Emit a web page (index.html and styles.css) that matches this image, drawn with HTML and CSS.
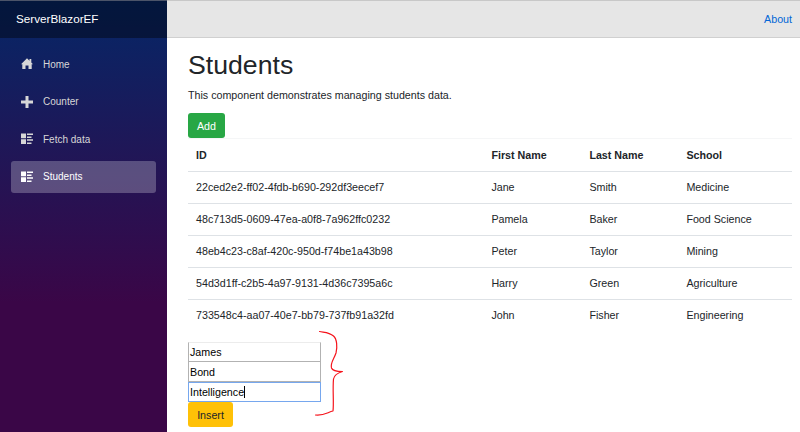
FILE: index.html
```html
<!DOCTYPE html>
<html lang="en">
<head>
<meta charset="utf-8">
<title>ServerBlazorEF</title>
<link rel="stylesheet" href="styles.css">
</head>
<body>
<div class="app">
  <aside class="sidebar">
    <div class="brand">ServerBlazorEF</div>
    <nav class="nav">
      <a class="nav-link"><svg class="icon" viewBox="0 0 12 12"><path d="M6 .2 0 6.3h1.3V11h3.200V7.500h3V11h3.200V6.300H12L10.300 4.500V1H8.500v1.700z"/></svg>Home</a>
      <a class="nav-link"><svg class="icon" viewBox="0 0 12 12"><path d="M4.500 0h3v4.500H12v3H7.500V12h-3V7.500H0v-3h4.500z"/></svg>Counter</a>
      <a class="nav-link"><svg class="icon" viewBox="0 0 12 12"><path d="M0 .5h5v4.700H0zM0 6.300h5V11H0zM6 .500h6V2H6zM6 3.500h4.500V5H6zM6 6.300h6v1.500H6zM6 9.500h4.500V11H6z"/></svg>Fetch data</a>
      <a class="nav-link active"><svg class="icon" viewBox="0 0 12 12"><path d="M0 .5h5v4.700H0zM0 6.300h5V11H0zM6 .500h6V2H6zM6 3.500h4.500V5H6zM6 6.300h6v1.500H6zM6 9.500h4.500V11H6z"/></svg>Students</a>
    </nav>
  </aside>
  <main class="main">
    <header class="top-row"><a class="about">About</a></header>
    <section class="content">
      <h1>Students</h1>
      <p class="lead">This component demonstrates managing students data.</p>
      <button class="btn btn-add">Add</button>
      <table class="table">
        <colgroup><col class="col-id"><col class="col-first"><col class="col-last"><col></colgroup>
        <thead><tr><th>ID</th><th>First Name</th><th>Last Name</th><th>School</th></tr></thead>
        <tbody>
          <tr><td>22ced2e2-ff02-4fdb-b690-292df3eecef7</td><td>Jane</td><td>Smith</td><td>Medicine</td></tr>
          <tr><td>48c713d5-0609-47ea-a0f8-7a962ffc0232</td><td>Pamela</td><td>Baker</td><td>Food Science</td></tr>
          <tr><td>48eb4c23-c8af-420c-950d-f74be1a43b98</td><td>Peter</td><td>Taylor</td><td>Mining</td></tr>
          <tr><td>54d3d1ff-c2b5-4a97-9131-4d36c7395a6c</td><td>Harry</td><td>Green</td><td>Agriculture</td></tr>
          <tr><td>733548c4-aa07-40e7-bb79-737fb91a32fd</td><td>John</td><td>Fisher</td><td>Engineering</td></tr>
        </tbody>
      </table>
      <div class="form">
        <div class="field">James</div>
        <div class="field">Bond</div>
        <div class="field focused">Intelligence<span class="caret"></span></div>
        <button class="btn btn-insert">Insert</button>
        <svg class="brace" viewBox="0 0 32 90"><path d="M5.500 1.500C10 2.500 15 2 19.500 6C23 9 23.500 17 22 23C20 29 16 33 17.500 38C18.500 41 23 41.500 28.500 41.500C25 42.500 20.500 44 19.500 49C18.500 60 20 72 19 81C14 82 10 86 1.500 85"/></svg>
      </div>
    </section>
  </main>
</div>
</body>
</html>
```
FILE: styles.css
```css
* { box-sizing: border-box; }
body {
  margin: 0;
  background: #fff;
  color: #212529;
  font: 10.7px/16px "Liberation Sans", Arial, sans-serif;
}
.app { display: flex; height: 432px; overflow: hidden; }
.sidebar {
  width: 167px;
  flex: none;
  background: linear-gradient(180deg, #052767 0%, #3a0647 70%);
}
.brand {
  height: 38px;
  padding-left: 16px;
  border-top: 1px solid #4b5469;
  background: rgba(0, 0, 0, .4);
  color: #fff;
  font-size: 11.7px;
  line-height: 36px;
}
.nav { display: flex; flex-direction: column; gap: 5.4px; padding: 10.4px 11px 0; }
.nav-link {
  display: flex;
  align-items: center;
  height: 32px;
  padding-left: 10px;
  border-radius: 3px;
  color: #d7d7d7;
  font-size: 10px;
  line-height: 17px;
}
.icon { width: 12px; height: 12px; margin-right: 10px; fill: currentColor; }
.active { background: rgba(255, 255, 255, .25); color: #fff; }
.main { flex: 1; min-width: 0; }
.top-row {
  display: flex;
  align-items: center;
  justify-content: flex-end;
  height: 38px;
  padding-right: 8px;
  border-top: 1px solid #c8c8c8;
  border-bottom: 1px solid #d0d0d0;
  background: #e6e6e6;
}
.about { color: #0366d6; }
.content { padding: 11px 8px 0 21px; }
h1 { margin: 0; font-size: 26.67px; font-weight: 400; line-height: 32px; }
.lead { margin: 6px 0 10px; }
.btn {
  display: block;
  height: 25px;
  padding: 0;
  border: 0;
  border-radius: 3px;
  font: inherit;
}
.btn-add { width: 37px; background: #28a745; color: #fff; }
.btn-insert { width: 45px; background: #ffc107; color: #212529; }
.table { width: 604px; table-layout: fixed; border-collapse: separate; border-spacing: 0; }
.col-id { width: 295px; }
.col-first { width: 98px; }
.col-last { width: 97px; }
th, td { height: 32px; padding: 0 8px 2px; border-top: 1px solid #dee2e6; text-align: left; }
th + th, td + td { padding-left: 8.4px; }
th { height: 34px; padding-bottom: 0; border-top-color: #f5f6f7; border-bottom: 1px solid #dee2e6; }
tbody tr:first-child td { height: 31px; border-top: 0; }
.form { position: relative; margin-top: 11px; }
.field {
  display: flex;
  align-items: center;
  width: 133px;
  height: 20px;
  padding-left: 1px;
  border: 1px solid #b2b2b2;
  border-top-color: #ececec;
  color: #000;
}
.field + .field { border-top: 0; padding-top: 1px; }
.field + .focused { border: 1px solid #76a7ee; padding-top: 0; }
.caret { width: 1px; height: 12px; background: #000; }
.brace {
  position: absolute;
  left: 126px;
  top: -12px;
  width: 32px;
  height: 90px;
  fill: none;
  stroke: #f5141c;
  stroke-width: 1.2;
  stroke-linecap: round;
  stroke-linejoin: round;
}
```
